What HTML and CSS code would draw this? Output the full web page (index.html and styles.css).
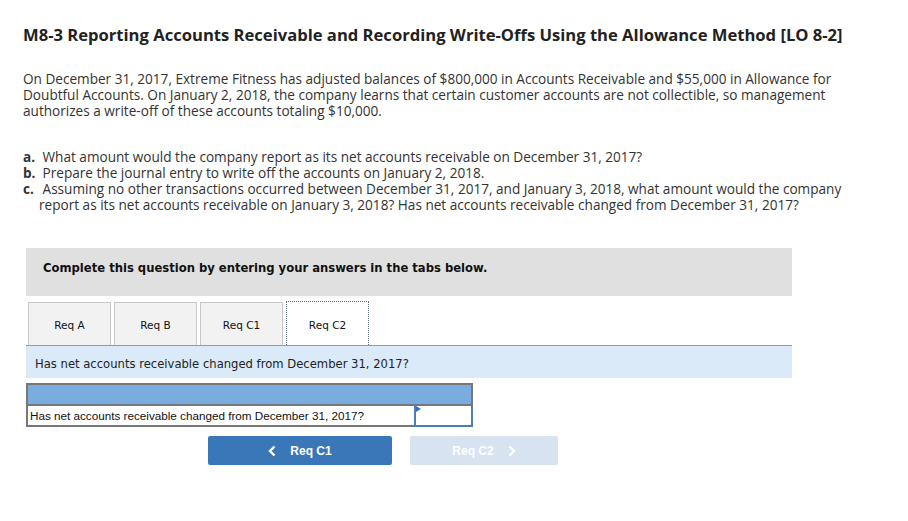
FILE: index.html
```html
<!DOCTYPE html>
<html>
<head>
<meta charset="utf-8">
<link rel="stylesheet" href="styles.css">
</head>
<body>
<div class="page">
  <h1 class="title">M8-3 Reporting Accounts Receivable and Recording Write-Offs Using the Allowance Method [LO 8-2]</h1>
  <p class="intro">On December 31, 2017, Extreme Fitness has adjusted balances of $800,000 in Accounts Receivable and $55,000 in Allowance for Doubtful Accounts. On January 2, 2018, the company learns that certain customer accounts are not collectible, so management authorizes a write-off of these accounts totaling $10,000.</p>
  <ol class="reqs">
    <li><b>a.</b> What amount would the company report as its net accounts receivable on December 31, 2017?</li>
    <li><b>b.</b> Prepare the journal entry to write off the accounts on January 2, 2018.</li>
    <li><b>c.</b> Assuming no other transactions occurred between December 31, 2017, and January 3, 2018, what amount would the company report as its net accounts receivable on January 3, 2018? Has net accounts receivable changed from December 31, 2017?</li>
  </ol>
  <div class="widget">
    <div class="banner">Complete this question by entering your answers in the tabs below.</div>
    <div class="tabs">
      <div class="tab">Req A</div>
      <div class="tab">Req B</div>
      <div class="tab">Req C1</div>
      <div class="tab active">Req C2</div>
    </div>
    <div class="prompt">Has net accounts receivable changed from December 31, 2017?</div>
    <table class="answer">
      <tr class="head"><td colspan="2"></td></tr>
      <tr class="row">
        <td class="label">Has net accounts receivable changed from December 31, 2017?</td>
        <td class="select"><span class="flag"></span></td>
      </tr>
    </table>
    <div class="nav">
      <div class="btn prev"><svg class="chev" width="8" height="12" viewBox="0 0 8 12"><path d="M6.5 1.5 L2 6 L6.5 10.5" fill="none" stroke="#fff" stroke-width="2.4"/></svg>Req C1</div>
      <div class="btn next">Req C2<svg class="chev" width="8" height="12" viewBox="0 0 8 12"><path d="M1.5 1.5 L6 6 L1.5 10.5" fill="none" stroke="#fff" stroke-width="2.4"/></svg></div>
    </div>
  </div>
</div>
</body>
</html>
```
FILE: styles.css
```css
html, body { margin: 0; padding: 0; background: #fff; }
.page { padding: 25px 0 0 23px; width: 830px; font-family: "Open Sans", "Liberation Sans", sans-serif; color: #333; }
.title { margin: 0; font-size: 16.6px; font-weight: 700; color: #222; line-height: 20px; }
.intro { margin: 26px 0 0; font-size: 13.6px; line-height: 16px; }
.reqs { list-style: none; margin: 30px 0 0; padding: 0; font-size: 13.6px; line-height: 16px; }
.reqs li { padding-left: 16px; text-indent: -16px; }
.reqs b { display: inline-block; width: 16px; text-indent: 0; font-weight: 700; color: #333; }
.widget { margin: 35px 0 0 3px; width: 766px; font-family: "DejaVu Sans", Verdana, sans-serif; }
.banner { background: #e0e0e0; height: 48px; box-sizing: border-box; padding: 13px 0 0 17px; font-size: 11.6px; font-weight: 700; color: #111; }
.tabs { display: flex; gap: 3px; margin-top: 6px; padding-left: 2px; border-bottom: 1px solid #999; height: 43px; }
.tab { width: 83px; box-sizing: border-box; padding-top: 2px; border: 1px solid #c8c8c8; border-bottom: none; background: #f2f2f2; font-size: 10.5px; color: #111; display: flex; align-items: center; justify-content: center; }
.tab.active { background: #fff; border: 1px dotted #5a6e8a; border-bottom: none; height: 44px; margin-top: -1px; }
.prompt { background: #daeaf8; height: 32px; box-sizing: border-box; padding: 11px 0 0 9px; font-size: 11.6px; color: #222; }
.answer { margin-top: 5px; border-collapse: collapse; width: 447px; border: 2px solid #777; font-family: "Liberation Sans", Arial, sans-serif; }
.answer td { padding: 0; }
.head td { background: #79acdf; height: 19px; border-bottom: 2px solid #777; }
.label { font-size: 11.7px; color: #111; height: 19px; padding-left: 2px !important; }
.select { width: 55px; border: 2px solid #4a7ebb; position: relative; }
.flag { position: absolute; left: 0; top: 0; width: 0; height: 0; border-left: 5px solid #3b6fb6; border-top: 3px solid transparent; border-bottom: 3px solid transparent; }
.nav { display: flex; gap: 18px; margin: 9px 0 0 182px; font-family: "Liberation Sans", Arial, sans-serif; }
.btn { height: 29px; border-radius: 2px; display: flex; align-items: center; justify-content: center; font-size: 12px; font-weight: 700; color: #fff; }
.prev { width: 184px; background: #3a77b9; }
.next { width: 148px; background: #d7e3f0; }
.prev .chev { margin-right: 14px; }
.next .chev { margin-left: 14px; }
```
